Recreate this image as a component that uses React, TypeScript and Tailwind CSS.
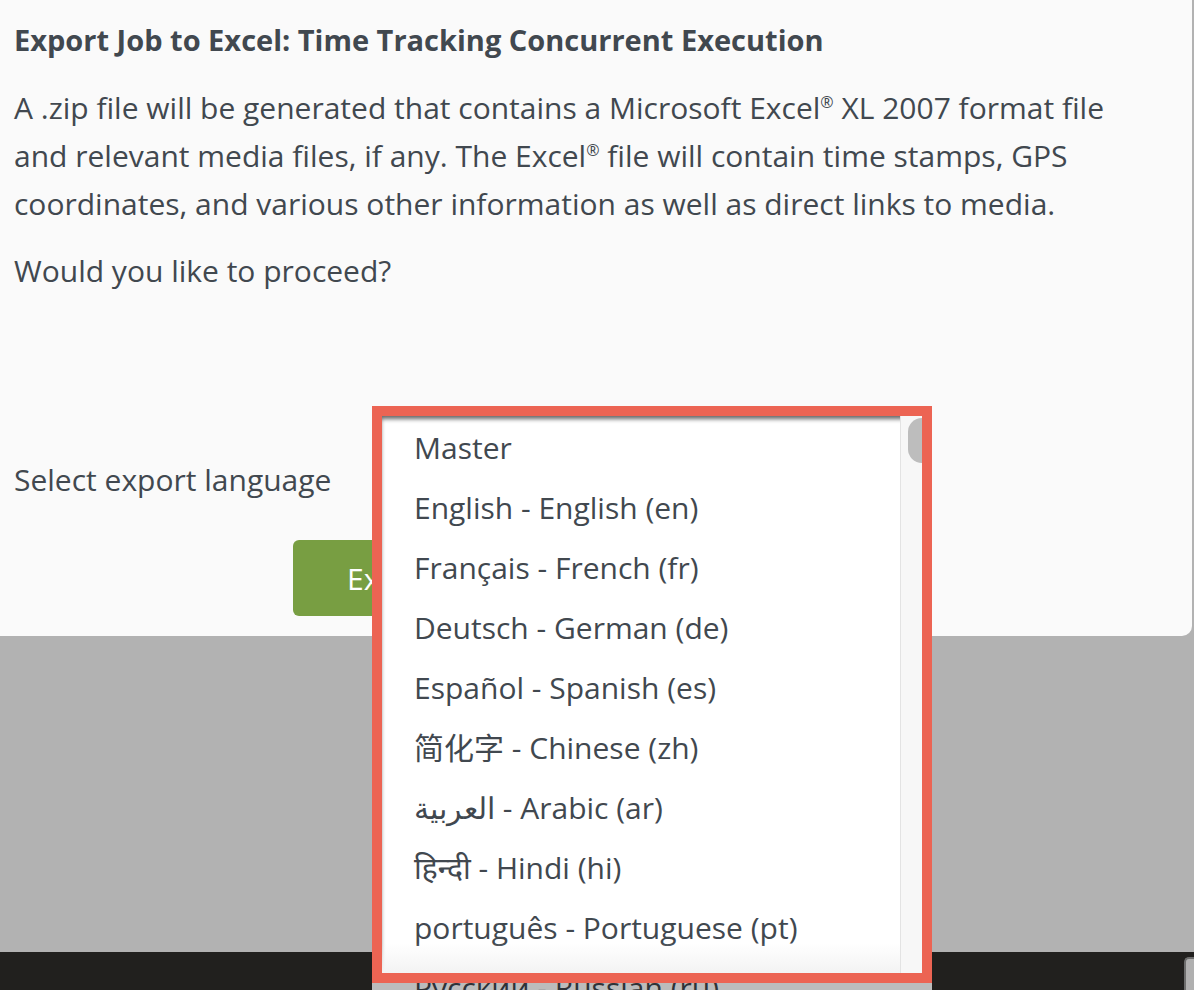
import React from 'react';

const languages = [
  'Master',
  'English - English (en)',
  'Français - French (fr)',
  'Deutsch - German (de)',
  'Español - Spanish (es)',
  '简化字 - Chinese (zh)',
  'العربية - Arabic (ar)',
  'हिन्दी - Hindi (hi)',
  'português - Portuguese (pt)',
];

const Reg = () => <span className="relative -top-[11px] text-[16px] leading-none">®</span>;

const App: React.FC = () => {
  return (
    <div
      className="relative flex h-[990px] w-full flex-col overflow-hidden bg-[#b2b2b2] text-[#41484f]"
      style={{ fontFamily: '"Open Sans", "Noto Sans", "Noto Sans CJK SC", sans-serif' }}
    >
      <div className="h-[636px] w-[1192px] shrink-0 rounded-br-[10px] bg-[#fafafa] px-[14px] pt-[20px]">
        <h1 className="text-[29px] font-bold leading-[40px]">
          Export Job to Excel: Time Tracking Concurrent Execution
        </h1>
        <p className="mt-[24px] text-[30px] leading-[48px]">
          A .zip file will be generated that contains a Microsoft Excel<Reg /> XL 2007 format file
          <br />
          and relevant media files, if any. The Excel<Reg /> file will contain time stamps, GPS
          <br />
          coordinates, and various other information as well as direct links to media.
        </p>
        <p className="mt-[19px] text-[30px] leading-[48px]">Would you like to proceed?</p>

        <div className="mt-[161px] flex items-center">
          <span className="text-[30px] leading-[48px]">Select export language</span>
        </div>

        <div className="mt-[36px] flex pl-[279px]">
          <button className="h-[76px] w-[210px] rounded-[6px] bg-[#789e42] pl-[54px] text-left text-[30px] text-white">
            Export
          </button>
        </div>
      </div>

      <div className="flex-1" />

      <footer className="flex h-[38px] shrink-0 justify-end bg-[#21201e]">
        <div className="mt-[5px] w-[10px] rounded-tl-[5px] border-l-2 border-t-2 border-[#6d6d6d] bg-[#b0b0b0]" />
      </footer>

      {/* language dropdown, highlighted */}
      <div className="absolute left-[372px] top-[406px] w-[560px]">
        <div className="relative h-[577px] overflow-hidden border-[10px] border-[#ec6453] bg-white">
          <ul className="h-full pt-[1px] pr-[22px]">
            {languages.map((lang) => (
              <li key={lang} className="flex h-[60px] items-center pl-[32px] text-[30px]">
                {lang}
              </li>
            ))}
          </ul>
          <div className="pointer-events-none absolute inset-0 shadow-[inset_0_4px_4px_-1px_rgba(0,0,0,0.6)]" />
          <div className="pointer-events-none absolute bottom-0 left-0 right-[22px] h-[30px] bg-gradient-to-b from-transparent to-[#f3f3f3]" />
          <div className="absolute bottom-0 right-0 top-0 w-[22px] border-l border-[#e3e3e3] bg-[#f7f7f7]">
            <div className="ml-[7px] mt-[2px] h-[45px] w-[14px] rounded-l-full bg-[#bdbdbd]" />
          </div>
        </div>
        <div className="h-[7px] overflow-hidden bg-[#bcbcbc] pl-[42px]">
          <div className="-mt-[25px] text-[30px] leading-[60px] text-[#2f3338]">Русский - Russian (ru)</div>
        </div>
      </div>
    </div>
  );
};

export default App;
